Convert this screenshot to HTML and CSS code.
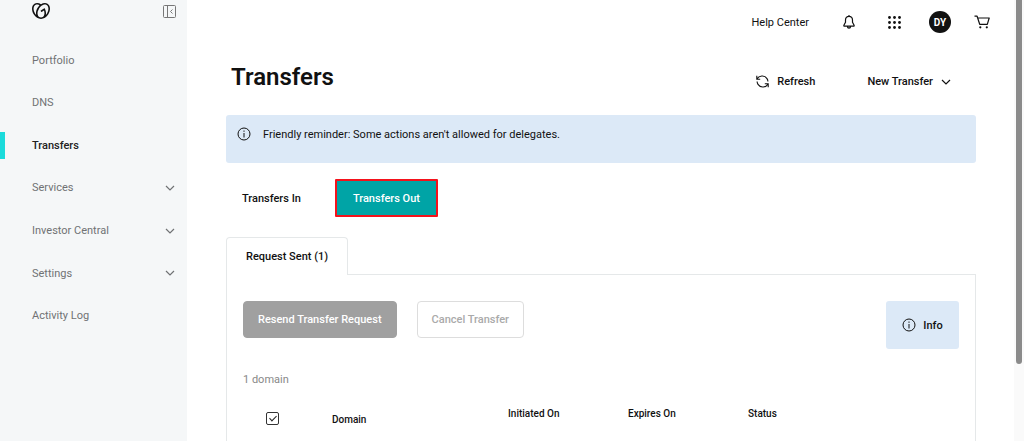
FILE: index.html
```html
<!DOCTYPE html>
<html lang="en">
<head>
<meta charset="utf-8">
<meta name="viewport" content="width=device-width, initial-scale=1">
<title>Transfers</title>
<link rel="stylesheet" href="styles.css">
</head>
<body>
<div class="shell">
  <aside class="sidebar">
    <div class="sidebar-head">
      <a class="logo" href="#" aria-label="Home">
        <svg width="18" height="18" viewBox="0 0 24 24" fill="#111">
          <path d="M20.702 2.29c-2.494-1.554-5.778-1.187-8.706.654C9.076 1.104 5.79.736 3.3 2.29c-3.941 2.463-4.42 8.806-1.07 14.167 2.47 3.954 6.333 6.269 9.77 6.226 3.439.043 7.301-2.273 9.771-6.226 3.347-5.361 2.872-11.704-1.069-14.167zM4.042 15.328a12.838 12.838 0 0 1-1.546-3.541 10.12 10.12 0 0 1-.336-3.338c.15-1.98.956-3.524 2.27-4.345 1.315-.822 3.052-.87 4.903-.137.281.113.556.24.825.382A15.11 15.11 0 0 0 7.5 7.54c-2.035 3.255-2.655 6.878-1.945 9.765a13.247 13.247 0 0 1-1.514-1.98zm17.465-3.541a12.866 12.866 0 0 1-1.547 3.54 13.25 13.25 0 0 1-1.513 1.984c.635-2.589.203-5.76-1.353-8.734a.39.39 0 0 0-.563-.153l-4.852 3.032a.397.397 0 0 0-.126.546l.712 1.139a.395.395 0 0 0 .547.126l3.145-1.965c.101.306.203.606.28.916.296 1.086.41 2.214.335 3.337-.15 1.982-.956 3.525-2.27 4.347a4.437 4.437 0 0 1-2.25.65h-.101a4.432 4.432 0 0 1-2.25-.65c-1.314-.822-2.121-2.365-2.27-4.347-.074-1.123.039-2.251.335-3.337a13.212 13.212 0 0 1 4.05-6.482 10.148 10.148 0 0 1 2.849-1.765c1.845-.733 3.586-.685 4.9.137 1.316.822 2.122 2.365 2.271 4.345a10.146 10.146 0 0 1-.33 3.334z"/>
        </svg>
      </a>
      <button class="icon-button muted" type="button" aria-label="Collapse menu">
        <svg width="13" height="13" viewBox="0 0 13 13" fill="none" stroke="currentColor"><rect x=".5" y=".5" width="12" height="12" rx="1"/><path d="M4.500.5v12M9.500 4.500l-2 2 2 2"/></svg>
      </button>
    </div>
    <nav class="menu">
      <a href="#">Portfolio</a>
      <a href="#">DNS</a>
      <a href="#" class="current" aria-current="page">Transfers</a>
      <a href="#">Services <svg class="chevron" viewBox="0 0 10 6"><path d="M1 1l4 4 4-4"/></svg></a>
      <a href="#">Investor Central <svg class="chevron" viewBox="0 0 10 6"><path d="M1 1l4 4 4-4"/></svg></a>
      <a href="#">Settings <svg class="chevron" viewBox="0 0 10 6"><path d="M1 1l4 4 4-4"/></svg></a>
      <a href="#">Activity Log</a>
    </nav>
  </aside>

  <div class="page">
    <header class="topbar">
      <a class="help" href="#">Help Center</a>
      <button class="icon-button bell" type="button" aria-label="Notifications">
        <svg width="12" height="14" viewBox="0 0 12 14" fill="none" stroke="currentColor" stroke-width="1.200" stroke-linejoin="round"><path d="M6 1.300C3.700 1.300 2.500 3 2.500 5v2.300L.9 10.300c-.2.500 0 .9.500.9h9.200c.5 0 .7-.4.500-.9L9.500 7.300V5C9.500 3 8.300 1.300 6 1.300zM6 0v1.300M4.400 11.400c.1 2.300 3.100 2.300 3.200 0"/></svg>
      </button>
      <button class="icon-button apps" type="button" aria-label="Apps">
        <svg width="13" height="13" viewBox="0 0 13 13" fill="currentColor"><circle cx="1.500" cy="1.500" r="1.400"/><circle cx="6.500" cy="1.500" r="1.400"/><circle cx="11.500" cy="1.500" r="1.400"/><circle cx="1.500" cy="6.500" r="1.400"/><circle cx="6.500" cy="6.500" r="1.400"/><circle cx="11.500" cy="6.500" r="1.400"/><circle cx="1.500" cy="11.500" r="1.400"/><circle cx="6.500" cy="11.500" r="1.400"/><circle cx="11.500" cy="11.500" r="1.400"/></svg>
      </button>
      <button class="avatar" type="button">DY</button>
      <button class="icon-button" type="button" aria-label="Cart">
        <svg width="16" height="14" viewBox="0 0 16 14" fill="none" stroke="currentColor" stroke-width="1.200" stroke-linejoin="round"><path d="M.5 1.200h2.600L5.700 9.300h7.600L15.200 3H3.700"/><circle cx="6.300" cy="12.300" r="1.100" fill="currentColor" stroke="none"/><circle cx="12.800" cy="12.300" r="1.100" fill="currentColor" stroke="none"/></svg>
      </button>
    </header>

    <main class="content">
      <div class="heading">
        <h1>Transfers</h1>
        <div class="heading-actions">
          <button class="text-button" type="button">
            <svg width="13" height="13" viewBox="0 0 13 13" fill="none" stroke="currentColor" stroke-width="1.100"><path d="M.8.8v3.400h3.400M1 4.100C2.800.6 8.500-.3 11 3.600c.6.900.9 1.800.9 2.800M12.200 12.200V8.800H8.800M12 8.900C10.200 12.400 4.500 13.300 2 9.400 1.400 8.500 1.100 7.600 1.100 6.600"/></svg>
            Refresh
          </button>
          <button class="text-button" type="button">
            New Transfer
            <svg class="chevron" viewBox="0 0 10 6"><path d="M1 1l4 4 4-4"/></svg>
          </button>
        </div>
      </div>

      <div class="notice" role="status">
        <svg width="14" height="14" viewBox="0 0 14 14" fill="none" stroke="currentColor"><circle cx="7" cy="7" r="6"/><path d="M7 6v4.500M7 3.500v1.300"/></svg>
        <p>Friendly reminder: Some actions aren't allowed for delegates.</p>
      </div>

      <div class="direction">
        <button class="direction-tab" type="button">Transfers In</button>
        <button class="direction-tab selected" type="button">Transfers Out</button>
      </div>

      <div class="tabs" role="tablist">
        <button class="tab" type="button" role="tab" aria-selected="true">Request Sent (1)</button>
      </div>
      <section class="panel">
        <div class="actions">
          <button class="button solid" type="button">Resend Transfer Request</button>
          <button class="button outline" type="button">Cancel Transfer</button>
          <button class="info" type="button">
            <svg width="14" height="14" viewBox="0 0 14 14" fill="none" stroke="currentColor"><circle cx="7" cy="7" r="6"/><path d="M7 6v4.500M7 3.500v1.300"/></svg>
            Info
          </button>
        </div>
        <p class="count">1 domain</p>
        <table class="domains">
          <colgroup><col class="col-check"><col class="col-domain"><col class="col-date"><col class="col-date"><col></colgroup>
          <thead>
            <tr>
              <th class="check-cell"><input type="checkbox" checked aria-label="Select all domains"></th>
              <th class="domain-cell">Domain</th>
              <th>Initiated On</th>
              <th>Expires On</th>
              <th>Status</th>
            </tr>
          </thead>
        </table>
      </section>
    </main>
  </div>

  <div class="scroll-track" aria-hidden="true"><div class="scroll-thumb"></div></div>
</div>
</body>
</html>
```
FILE: styles.css
```css
* { box-sizing: border-box; }

body {
  margin: 0;
  background: #fff;
  color: #111;
  font: 11px/17px Roboto, "Noto Sans", sans-serif;
}

h1, p { margin: 0; }

a { color: inherit; text-decoration: none; }

button {
  margin: 0;
  padding: 0;
  border: 0;
  background: none;
  color: inherit;
  font: inherit;
  white-space: nowrap;
  cursor: pointer;
}

svg { display: block; flex: none; }

.chevron {
  width: 10px;
  height: 6px;
  fill: none;
  stroke: currentColor;
  stroke-width: 1.2;
  overflow: visible;
}

.shell {
  display: grid;
  grid-template-columns: 187px minmax(0, 1fr) 10px;
  grid-template-rows: minmax(0, 1fr);
  height: 100vh;
  overflow: hidden;
}

/* Sidebar */
.sidebar { background: #f5f7f8; color: #707274; }

.sidebar-head {
  display: flex;
  justify-content: space-between;
  align-items: center;
  height: 39px;
  padding: 0 11px 17px 32px;
}

.icon-button { display: flex; align-items: center; justify-content: center; }

.muted { color: #777; }

.menu {
  display: grid;
  grid-auto-rows: 1fr;
  min-height: 298px;
}

.menu a {
  display: flex;
  align-items: center;
  justify-content: space-between;
  padding: 0 12px 0 32px;
}

.menu .current {
  align-self: center;
  height: 27px;
  padding-left: 27px;
  border-left: 5px solid #1bdbdb;
  color: #222;
  font-weight: 500;
}

/* Top bar */
.topbar {
  display: flex;
  align-items: center;
  justify-content: flex-end;
  height: 44px;
  padding-right: 24px;
}

.help { margin-right: 34px; }
.bell { margin-right: 33px; }
.apps { margin-right: 28px; }

.avatar {
  width: 22px;
  height: 22px;
  margin-right: 23px;
  border-radius: 50%;
  background: #111;
  color: #fff;
  font-size: 10px;
  font-weight: 700;
}

/* Content */
.content { padding: 16px 38px 0 39px; }

.heading {
  display: flex;
  align-items: flex-start;
  justify-content: space-between;
  padding: 0 25px 0 5px;
}

h1 { font-size: 24px; line-height: 34px; font-weight: 600; }

.heading-actions { display: flex; gap: 52px; padding-top: 13px; }

.text-button {
  display: flex;
  align-items: center;
  gap: 8px;
  font-weight: 500;
}

.notice {
  display: flex;
  gap: 12px;
  min-height: 48px;
  margin-top: 21px;
  padding: 11px 11px;
  border-radius: 3px;
  background: #dce9f7;
}

.notice svg { margin-top: 1px; }

.direction { display: flex; gap: 18px; margin-top: 16px; }

.direction-tab { height: 38px; padding: 0 16px; font-weight: 500; }

.direction-tab.selected {
  border: 2px solid #f4121b;
  border-radius: 1px;
  background: #00a4a6;
  color: #fff;
}

.tabs { display: flex; margin-top: 20px; }

.tab {
  z-index: 1;
  height: 38px;
  margin-bottom: -1px;
  padding: 0 19px;
  border: 1px solid #e5e8e9;
  border-bottom: 0;
  border-radius: 4px 4px 0 0;
  background: #fff;
  font-weight: 500;
}

.panel {
  min-height: 220px;
  padding: 26px 16px 0;
  border: 1px solid #e5e8e9;
}

.actions { display: flex; align-items: flex-start; gap: 20px; }

.button {
  height: 37px;
  padding: 0 14px;
  border: 1px solid #ddd;
  border-radius: 4px;
  font-weight: 500;
}

.solid { border-color: #a0a0a0; background: #a0a0a0; color: #fff; }
.outline { color: #aaa; }

.info {
  display: flex;
  align-items: center;
  justify-content: center;
  gap: 7px;
  width: 73px;
  height: 48px;
  margin-left: auto;
  border-radius: 3px;
  background: #dce9f7;
  font-weight: 500;
}

.count { margin-top: 22px; color: #888; }

.domains {
  width: 100%;
  margin-top: 17px;
  border-collapse: collapse;
  table-layout: fixed;
}

.col-check { width: 89px; }
.col-domain { width: 176px; }
.col-date { width: 120px; }

th {
  padding: 0;
  font-size: 10px;
  line-height: 17px;
  font-weight: 500;
  text-align: left;
  vertical-align: top;
}

.check-cell { padding: 7px 0 0 23px; }
.domain-cell { padding-top: 6px; }

.check-cell input {
  display: block;
  appearance: none;
  width: 13px;
  height: 13px;
  margin: 0;
  border: 1px solid #333;
  border-radius: 2px;
  background: #fff;
}

.check-cell input:checked::after {
  content: "";
  display: block;
  width: 3px;
  height: 6px;
  margin: 1px 0 0 4px;
  border: solid #222;
  border-width: 0 1px 1px 0;
  transform: rotate(45deg);
}

/* Scroll indicator */
.scroll-track { padding: 0 2px; background: #fafafa; }

.scroll-thumb {
  height: 82.5%;
  border-radius: 0 0 3px 3px;
  background: #8b8b8b;
}
```
